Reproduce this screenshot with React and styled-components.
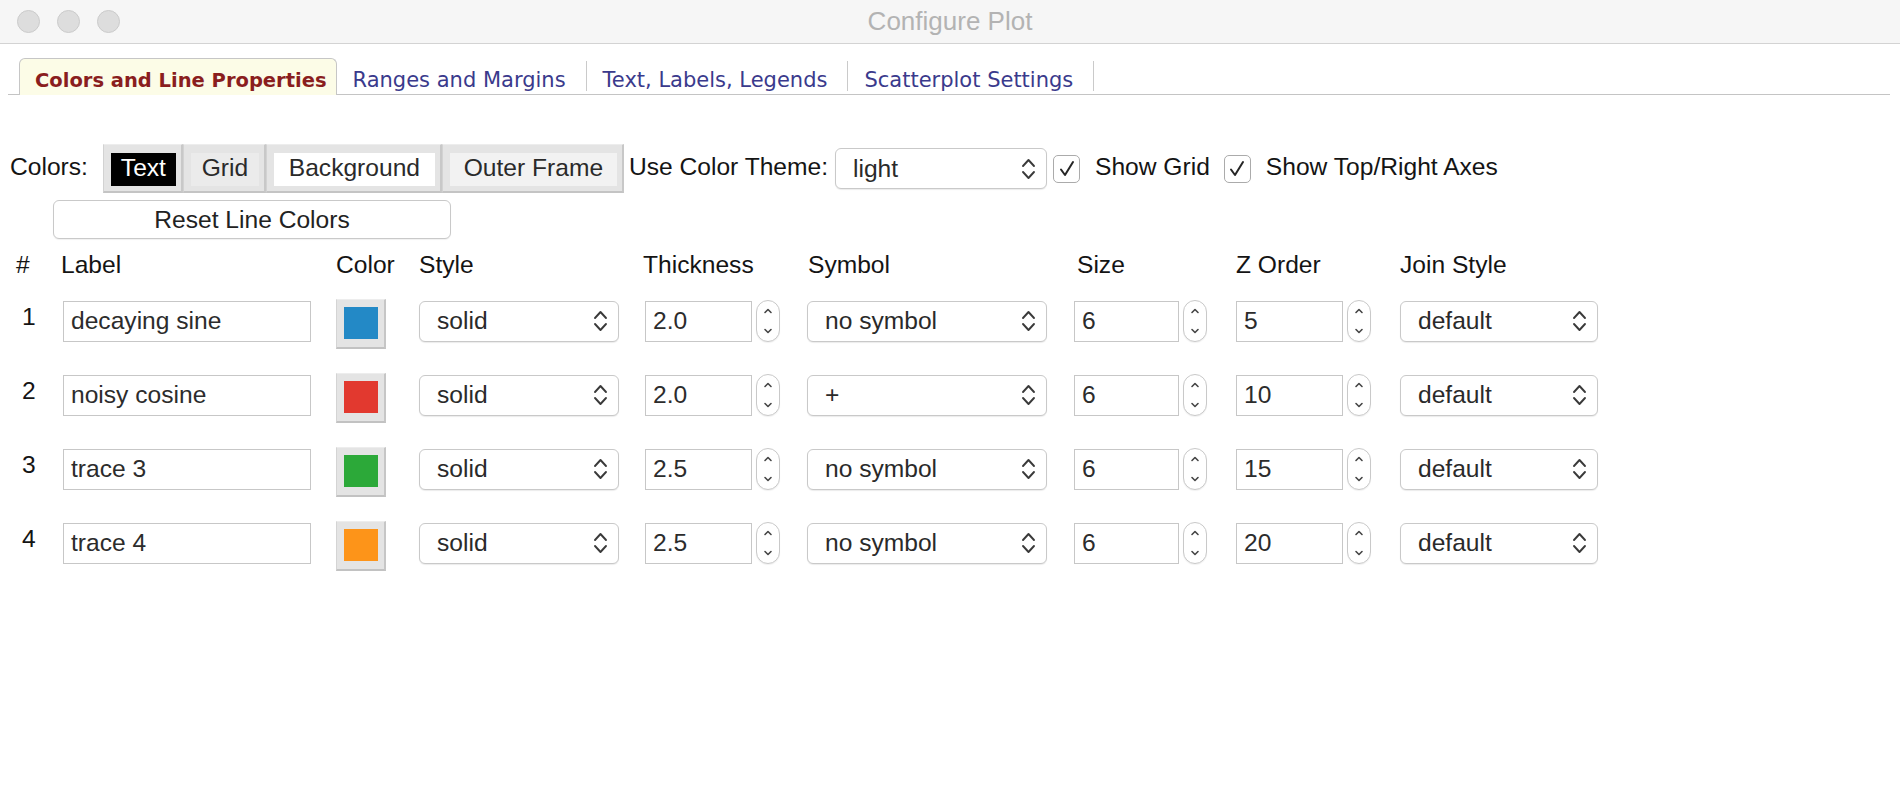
import React from 'react';
import styled, { createGlobalStyle } from 'styled-components';

const GlobalStyle = createGlobalStyle`
  html, body { margin: 0; padding: 0; background: #fff; }
  body { font-family: "Liberation Sans", Arial, Helvetica, sans-serif; color: #141414; }
  * { box-sizing: border-box; }
`;

const Window = styled.div`
  width: 1900px;
  height: 800px;
  background: #fff;
  overflow: hidden;
`;

const TitleBar = styled.div`
  height: 44px;
  display: grid;
  grid-template-columns: 1fr auto 1fr;
  align-items: center;
  background: #f6f6f6;
  border-bottom: 1px solid #d3d3d3;
`;

const Lights = styled.div`
  display: flex;
  gap: 17px;
  padding-left: 17px;
`;

const Light = styled.span`
  width: 23px;
  height: 23px;
  border-radius: 50%;
  background: #dddddd;
  border: 1px solid #cbcbcb;
`;

const Title = styled.div`
  font-size: 26px;
  color: #b3b3b3;
`;

const TabStrip = styled.div`
  margin: 0 10px 0 8px;
  padding: 14px 0 0 11px;
  display: flex;
  align-items: flex-end;
  border-bottom: 1px solid #c4c4c4;
  height: 51px;
`;

const Tab = styled.div`
  height: ${p => (p.$active ? '37px' : '36px')};
  margin-bottom: ${p => (p.$active ? '-1px' : '0')};
  display: flex;
  align-items: center;
  font-family: "DejaVu Sans", "Liberation Sans", sans-serif;
  font-size: ${p => (p.$active ? '19.5px' : '21px')};
  font-weight: ${p => (p.$active ? 700 : 400)};
  color: ${p => (p.$active ? '#8a1e1e' : '#3a3a8c')};
  padding: ${p => (p.$active ? '7px 9px 0 15px' : '7px 20px 0 16px')};
  background: ${p => (p.$active ? '#fcfce7' : 'transparent')};
  border: ${p => (p.$active ? '1px solid #c6c6c6' : 'none')};
  border-bottom: none;
  border-radius: 6px 6px 0 0;
  white-space: nowrap;
`;

const TabSep = styled.span`
  width: 1px;
  height: 30px;
  background: #cacaca;
  align-self: center;
`;

const Panel = styled.div`
  padding: 49px 0 0 10px;
`;

const ColorsRow = styled.div`
  display: flex;
  align-items: center;
  height: 49px;
  font-size: 24.6px;
  white-space: nowrap;
`;

const RowLabel = styled.span`
  margin-right: ${p => p.$mr || 0}px;
  margin-left: ${p => p.$ml || 0}px;
  margin-top: -3px;
`;

const BevelButton = styled.div`
  width: ${p => p.$w}px;
  height: 49px;
  display: flex;
  padding: 8px 5px 5px 7px;
  background: #e4e4e4;
  border-top: 1px solid #ededed;
  border-left: 1px solid #d2d2d2;
  border-right: 2px solid #c8c8c8;
  border-bottom: 2px solid #c4c4c4;
`;

const BevelFace = styled.span`
  flex: 1;
  display: flex;
  align-items: center;
  justify-content: center;
  padding-bottom: 3px;
  background: ${p => p.$bg};
  color: ${p => p.$fg};
  font-size: 24.6px;
`;

const SelectBox = styled.div`
  width: ${p => p.$w}px;
  height: 41px;
  display: flex;
  align-items: center;
  justify-content: space-between;
  padding: 0 10px 0 17px;
  background: #fff;
  border: 1px solid #c9c9c9;
  border-radius: 6px;
  box-shadow: 0 1px 1px rgba(0, 0, 0, 0.08);
  font-size: 24.6px;
  color: #2a2a2a;
  margin-left: ${p => p.$ml || 0}px;
`;

const CheckItem = styled.div`
  display: flex;
  align-items: center;
  gap: 15px;
  margin-left: ${p => p.$ml || 0}px;
`;

const CheckBox = styled.span`
  width: 27px;
  height: 28px;
  display: flex;
  align-items: center;
  justify-content: center;
  border: 1px solid #ababab;
  border-radius: 5px;
  background: #fff;
`;

const ResetButton = styled.div`
  margin: 7px 0 0 43px;
  width: 398px;
  height: 39px;
  display: flex;
  align-items: center;
  justify-content: center;
  border: 1px solid #c9c9c9;
  border-radius: 6px;
  background: #fff;
  box-shadow: 0 1px 1px rgba(0, 0, 0, 0.06);
  font-size: 24.6px;
  color: #222;
`;

const Table = styled.div`
  margin-top: 6px;
  display: grid;
  grid-template-columns: 51px 275px 83px 224px 164px 267px 162px 164px 220px;
  grid-template-rows: 39px repeat(4, 74px);
  align-items: center;
  font-size: 24.6px;
`;

const HeadCell = styled.div`
  padding-left: ${p => p.$pl || 0}px;
  color: #141414;
  white-space: nowrap;
`;

const NumCell = styled.div`
  padding-left: 12px;
  margin-top: -8px;
  color: #141414;
`;

const Cell = styled.div`
  display: flex;
  align-items: center;
  gap: 4px;
  padding-left: ${p => p.$pl || 0}px;
`;

const TextInput = styled.div`
  width: ${p => p.$w}px;
  height: 41px;
  display: flex;
  align-items: center;
  padding-left: 7px;
  border: 1px solid #c7c7c7;
  background: #fff;
  font-size: 24.6px;
  color: #2c2c2c;
  white-space: nowrap;
`;

const SpinBox = styled.div`
  width: 24px;
  height: 42px;
  display: flex;
  align-items: center;
  justify-content: center;
  border: 1px solid #c9c9c9;
  border-radius: 12px;
  background: #fff;
  box-shadow: 0 1px 1px rgba(0, 0, 0, 0.06);
`;

const Chevrons = () => (
  <svg width="15" height="26" viewBox="0 0 15 26">
    <path
      d="M2 10 L7.5 4 L13 10 M2 16 L7.5 22 L13 16"
      fill="none"
      stroke="#3a3a3a"
      strokeWidth="1.9"
      strokeLinecap="round"
      strokeLinejoin="round"
    />
  </svg>
);

const SpinArrows = () => (
  <svg width="10" height="30" viewBox="0 0 10 30">
    <path
      d="M2 6.5 L5 3.5 L8 6.5 M2 23.5 L5 26.5 L8 23.5"
      fill="none"
      stroke="#454545"
      strokeWidth="1.6"
      strokeLinecap="round"
      strokeLinejoin="round"
    />
  </svg>
);

const Check = () => (
  <svg width="18" height="20" viewBox="0 0 18 20">
    <path d="M3 10.5 L7 16 L15 3" fill="none" stroke="#262626" strokeWidth="2" strokeLinecap="round" strokeLinejoin="round" />
  </svg>
);

const Select = ({ w, ml, children }) => (
  <SelectBox $w={w} $ml={ml}>
    <span>{children}</span>
    <Chevrons />
  </SelectBox>
);

const Spinner = ({ w, value }) => (
  <>
    <TextInput $w={w}>{value}</TextInput>
    <SpinBox>
      <SpinArrows />
    </SpinBox>
  </>
);

const SwatchButton = styled.div`
  width: 50px;
  height: 50px;
  display: flex;
  padding: 7px 6px 8px 7px;
  background: #e4e4e4;
  border-top: 1px solid #ededed;
  border-left: 1px solid #d4d4d4;
  border-right: 2px solid #c6c6c6;
  border-bottom: 2px solid #c2c2c2;
  margin-top: 6px;
`;

const SwatchFace = styled.span`
  flex: 1;
  background: ${p => p.$c};
`;

const rows = [
  { n: 1, label: 'decaying sine', color: '#2389c6', thick: '2.0', symbol: 'no symbol', size: '6', z: '5' },
  { n: 2, label: 'noisy cosine', color: '#e2392f', thick: '2.0', symbol: '+', size: '6', z: '10' },
  { n: 3, label: 'trace 3', color: '#2ca939', thick: '2.5', symbol: 'no symbol', size: '6', z: '15' },
  { n: 4, label: 'trace 4', color: '#fd9419', thick: '2.5', symbol: 'no symbol', size: '6', z: '20' },
];

const tabs = ['Ranges and Margins', 'Text, Labels, Legends', 'Scatterplot Settings'];

export default function App() {
  return (
    <Window>
      <GlobalStyle />
      <TitleBar>
        <Lights>
          <Light />
          <Light />
          <Light />
        </Lights>
        <Title>Configure Plot</Title>
        <span />
      </TitleBar>

      <TabStrip>
        <Tab $active>Colors and Line Properties</Tab>
        {tabs.map((t, i) => (
          <React.Fragment key={t}>
            {i > 0 && <TabSep />}
            <Tab>{t}</Tab>
          </React.Fragment>
        ))}
        <TabSep />
      </TabStrip>

      <Panel>
        <ColorsRow>
          <RowLabel $mr={15}>Colors:</RowLabel>
          <BevelButton $w={80}>
            <BevelFace $bg="#000" $fg="#fff">Text</BevelFace>
          </BevelButton>
          <BevelButton $w={83}>
            <BevelFace $bg="#ebebeb" $fg="#2a2a2a">Grid</BevelFace>
          </BevelButton>
          <BevelButton $w={176}>
            <BevelFace $bg="#ffffff" $fg="#2a2a2a">Background</BevelFace>
          </BevelButton>
          <BevelButton $w={182}>
            <BevelFace $bg="#f2f2f2" $fg="#2a2a2a">Outer Frame</BevelFace>
          </BevelButton>
          <RowLabel $ml={5}>Use Color Theme:</RowLabel>
          <Select w={212} ml={7}>light</Select>
          <CheckItem $ml={6}>
            <CheckBox>
              <Check />
            </CheckBox>
            <RowLabel>Show Grid</RowLabel>
          </CheckItem>
          <CheckItem $ml={14}>
            <CheckBox>
              <Check />
            </CheckBox>
            <RowLabel>Show Top/Right Axes</RowLabel>
          </CheckItem>
        </ColorsRow>

        <ResetButton>Reset Line Colors</ResetButton>

        <Table>
          <HeadCell $pl={6}>#</HeadCell>
          <HeadCell>Label</HeadCell>
          <HeadCell>Color</HeadCell>
          <HeadCell>Style</HeadCell>
          <HeadCell>Thickness</HeadCell>
          <HeadCell $pl={1}>Symbol</HeadCell>
          <HeadCell $pl={3}>Size</HeadCell>
          <HeadCell>Z Order</HeadCell>
          <HeadCell>Join Style</HeadCell>

          {rows.map(r => (
            <React.Fragment key={r.n}>
              <NumCell>{r.n}</NumCell>
              <Cell $pl={2}>
                <TextInput $w={248}>{r.label}</TextInput>
              </Cell>
              <Cell>
                <SwatchButton>
                  <SwatchFace $c={r.color} />
                </SwatchButton>
              </Cell>
              <Cell>
                <Select w={200}>solid</Select>
              </Cell>
              <Cell $pl={2}>
                <Spinner w={107} value={r.thick} />
              </Cell>
              <Cell>
                <Select w={240}>{r.symbol}</Select>
              </Cell>
              <Cell>
                <Spinner w={105} value={r.size} />
              </Cell>
              <Cell>
                <Spinner w={107} value={r.z} />
              </Cell>
              <Cell>
                <Select w={198}>default</Select>
              </Cell>
            </React.Fragment>
          ))}
        </Table>
      </Panel>
    </Window>
  );
}
